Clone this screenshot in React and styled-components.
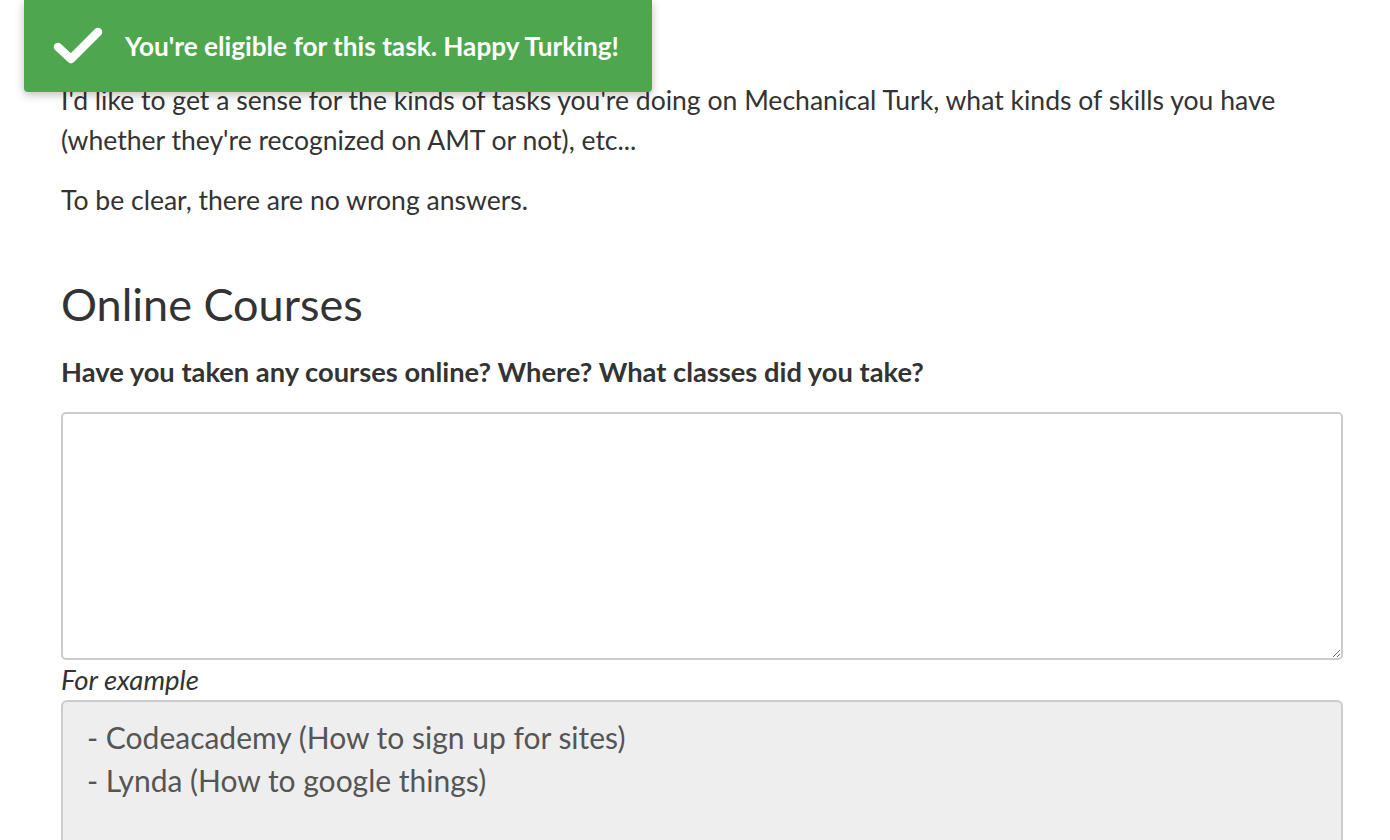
import React from "react";
import styled, { createGlobalStyle } from "styled-components";

const GlobalStyle = createGlobalStyle`
  html, body {
    margin: 0;
    padding: 0;
    background: #fff;
  }
  body {
    font-family: Lato, "Liberation Sans", sans-serif;
    color: #333;
    overflow: hidden;
  }
`;

const Page = styled.div`
  position: relative;
  width: 1390px;
  height: 840px;
  overflow: hidden;
`;

const Toast = styled.div`
  position: absolute;
  top: 0;
  left: 24px;
  width: 628px;
  height: 92px;
  box-sizing: border-box;
  background: #4ea64f;
  border-radius: 0 0 4px 4px;
  box-shadow: 0 3px 10px rgba(0, 0, 0, 0.25);
  display: flex;
  align-items: center;
  padding: 0 0 0 29px;
  gap: 22px;
  color: #fff;
  font-size: 26.2px;
  font-weight: 700;
  z-index: 2;
`;

const Content = styled.main`
  padding: 80px 47px 0 61px;
`;

const Para = styled.p`
  margin: 0 0 20px;
  font-size: 26.55px;
  line-height: 40px;
`;

const Heading = styled.h2`
  margin: 56px 0 24px;
  font-size: 45px;
  font-weight: 400;
  line-height: 56px;
`;

const Question = styled.label`
  display: block;
  font-size: 27.3px;
  font-weight: 700;
  line-height: 32px;
  margin-bottom: 24px;
`;

const Answer = styled.textarea`
  display: block;
  width: 100%;
  height: 248px;
  box-sizing: border-box;
  border: 2px solid #ccc;
  border-radius: 5px;
  resize: vertical;
  font: inherit;
  margin: 0;
`;

const Hint = styled.div`
  font-size: 27.5px;
  font-style: italic;
  line-height: 40px;
`;

const Example = styled.pre`
  margin: 0;
  box-sizing: border-box;
  width: 100%;
  min-height: 200px;
  background: #eee;
  border: 2px solid #ccc;
  border-radius: 6px;
  padding: 14px 24px;
  font-family: Lato, "Liberation Sans", sans-serif;
  font-size: 30px;
  line-height: 43px;
  color: #555;
  white-space: pre-wrap;
`;

function Check() {
  return (
    <svg width="50" height="40" viewBox="0 0 50 40">
      <path
        d="M5 21 L18 33 L45 6"
        fill="none"
        stroke="#fff"
        strokeWidth="8.5"
        strokeLinecap="round"
        strokeLinejoin="round"
      />
    </svg>
  );
}

export default function App() {
  return (
    <Page>
      <GlobalStyle />
      <Toast>
        <Check />
        <span>You're eligible for this task. Happy Turking!</span>
      </Toast>
      <Content>
        <Para>
          I'd like to get a sense for the kinds of tasks you're doing on
          Mechanical Turk, what kinds of skills you have (whether they're
          recognized on AMT or not), etc...
        </Para>
        <Para>To be clear, there are no wrong answers.</Para>
        <Heading>Online Courses</Heading>
        <Question htmlFor="courses">
          Have you taken any courses online? Where? What classes did you take?
        </Question>
        <Answer id="courses" />
        <Hint>For example</Hint>
        <Example>
          {"- Codeacademy (How to sign up for sites)\n- Lynda (How to google things)"}
        </Example>
      </Content>
    </Page>
  );
}
